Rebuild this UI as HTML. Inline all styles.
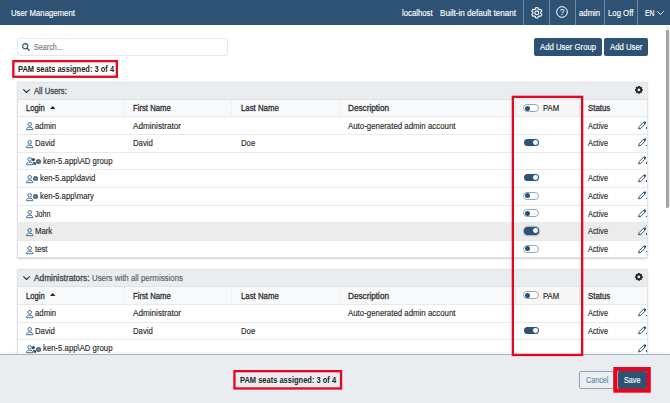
<!DOCTYPE html>
<html><head><meta charset="utf-8"><title>User Management</title>
<style>
*{box-sizing:border-box;margin:0;padding:0}
html,body{width:670px;height:403px;overflow:hidden;background:#fff}
body{font-family:"Liberation Sans",sans-serif;font-size:8.45px;color:#2a2a2a;position:relative}
.abs{position:absolute}
.t{--sx:.92;--ty:0px;position:absolute;top:0;display:inline-block;transform:translateY(var(--ty)) scaleX(var(--sx));transform-origin:0 50%;white-space:nowrap;-webkit-text-stroke:0.14px currentColor}

.b{font-weight:bold;font-size:8.7px;--sx:.85;-webkit-text-stroke:0}
.sb{font-size:8.7px;-webkit-text-stroke:0.3px currentColor;--sx:.9}
#hdr{left:0;top:0;width:670px;height:25px;background:#2e5274;color:#fff;line-height:26.5px}
.sep{position:absolute;top:0;width:1px;height:25px;background:#708aa3}
.btn{background:#2e5274;color:#fff;border-radius:2px;line-height:18.6px;height:17.5px}
.panel{left:17px;width:631px;border:1px solid #e2e5e8;background:#fff;overflow:hidden;box-shadow:0 0.5px 1.5px rgba(0,0,0,.18);border-radius:1.5px}
.ph{height:15.8px;background:#e9edf0;line-height:16.4px;position:relative;color:#444}
.row{height:17.7px;position:relative;border-top:1px solid #e8eaec;line-height:17.4px}
.row.h{color:#2f2f2f;background:#f8f9fa;border-top-color:#dfe2e5;line-height:17.4px}
.row.sel{background:#ececec}
.row.sel .tg.on{box-shadow:0 0 0 1.2px rgba(46,82,116,.32)}
.p2 .row.h{line-height:18.2px}
.pamh{position:absolute;left:497px;top:-1px;width:65px;height:18.4px;border:1px solid #e4e6e8;background:#f7f7f7}
.vs{position:absolute;top:0;width:1px;height:17px;background:#eef0f1}
.ic{position:absolute;display:block;overflow:visible}
.dot{position:absolute;left:628.2px;top:9.9px;width:1.4px;height:1.4px;background:#333;border-radius:50%}
.tg{position:absolute;left:506px;top:3.6px;width:15.3px;height:7.6px;border-radius:4px}
.tg.on{background:#2e5274}
.tg.on i{position:absolute;right:1.3px;top:1.4px;width:4.8px;height:4.8px;border-radius:50%;background:#fff}
.tg.off{background:#fff;border:1px solid #9aa9b8;height:8px;left:505.4px;width:15.7px}
.row.h .tg{top:4.6px}
.p2 .row .tg{top:4.2px}
.tg.off i{position:absolute;left:0.5px;top:0.5px;width:5px;height:5px;border-radius:50%;background:#2e5274}
.red{border:2px solid #e6061f;position:absolute}
</style></head><body>
<div id="hdr" class="abs">
<span class="t " style="left:11.3px;">User Management</span>
<span class="t " style="left:401.5px;">localhost</span>
<span class="t " style="left:440px;--sx:0.959;">Built-in default tenant</span>
<span class="t " style="left:578.7px;">admin</span>
<span class="t " style="left:608.3px;">Log Off</span>
<span class="t " style="left:644.8px;--sx:0.8;">EN</span>
<div class="sep" style="left:523px"></div><div class="sep" style="left:549px"></div><div class="sep" style="left:574.7px"></div><div class="sep" style="left:604.3px"></div><div class="sep" style="left:637px"></div>
<svg class="ic" style="left:530.7px;top:6.7px" width="11.6" height="11.6" viewBox="0 0 11.6 11.6"><path d="M4.75 0.61 L6.85 0.61 L7.21 2.06 L8.34 2.71 L9.77 2.29 L10.82 4.11 L9.75 5.15 L9.75 6.45 L10.82 7.49 L9.77 9.31 L8.34 8.89 L7.21 9.54 L6.85 10.99 L4.75 10.99 L4.39 9.54 L3.26 8.89 L1.83 9.31 L0.78 7.49 L1.85 6.45 L1.85 5.15 L0.78 4.11 L1.83 2.29 L3.26 2.71 L4.39 2.06Z" fill="none" stroke="#fff" stroke-width="1.05" stroke-linejoin="round"/><circle cx="5.8" cy="5.8" r="1.9" fill="none" stroke="#fff" stroke-width="1.05"/></svg>
<svg class="ic" style="left:555.8px;top:5.8px" width="12" height="12" viewBox="0 0 12 12"><circle cx="6" cy="6" r="5.35" fill="none" stroke="#fff" stroke-width="1"/><text x="6" y="8.9" font-family="Liberation Sans, sans-serif" font-size="8.4" fill="#fff" text-anchor="middle">?</text></svg>
<svg class="ic" style="left:657.3px;top:10.8px" width="7" height="4.2" viewBox="0 0 7 4.2"><path d="M0.6 0.6 L3.5 3.5 L6.4 0.6" fill="none" stroke="#fff" stroke-width="1" stroke-linecap="round" stroke-linejoin="round"/></svg>
</div>
<div class="abs" style="left:17px;top:38px;width:211px;height:18px;border:1px solid #e5e8ec;border-radius:2px;line-height:16.6px;color:#7a7a7a"><svg class="ic" style="left:4.3px;top:4px" width="8" height="8" viewBox="0 0 8 8"><circle cx="3.2" cy="3.2" r="2.55" fill="none" stroke="#2e5274" stroke-width="1.15"/><path d="M5.1 5.1 L7.2 7.2" stroke="#2e5274" stroke-width="1.3" stroke-linecap="round"/></svg><span class="t " style="left:15.8px;--sx:0.85;">Search...</span></div>
<div class="abs btn" style="left:534px;top:38px;width:67.5px"><span class="t " style="left:6px;">Add User Group</span></div>
<div class="abs btn" style="left:604px;top:38px;width:44px"><span class="t " style="left:5.8px;">Add User</span></div>
<span class="t b" style="left:17.7px;top:62px;--sx:0.863;line-height:14px;color:#222">PAM seats assigned: 3 of 4</span>
<svg class="ic" style="left:11px;top:59px" width="108" height="20" viewBox="0 0 108 20"><rect x="2.35" y="2.15" width="103.50" height="15.60" fill="none" stroke="#e6061f" stroke-width="2.3"/></svg>
<div class="abs panel " style="top:81.6px;height:176.4px"><div class="ph" style="height:15.95px"><svg class="ic" style="left:5.0px;top:6.4px" width="7.1" height="4.2" viewBox="0 0 7.1 4.2"><path d="M0.6 0.6 L3.55 3.5 L6.5 0.6" fill="none" stroke="#333" stroke-width="1.15" stroke-linecap="round" stroke-linejoin="round"/></svg><span class="t sb" style="left:16.2px;--sx:0.882;">All Users:</span><svg class="ic" style="left:617px;top:3.4px" width="7.8" height="7.8" viewBox="0 0 7.8 7.8"><path d="M3.05 0.09 L4.75 0.09 L5.00 1.22 L5.02 1.22 L5.99 0.61 L7.19 1.81 L6.58 2.78 L6.58 2.80 L7.71 3.05 L7.71 4.75 L6.58 5.00 L6.58 5.02 L7.19 5.99 L5.99 7.19 L5.02 6.58 L5.00 6.58 L4.75 7.71 L3.05 7.71 L2.80 6.58 L2.78 6.58 L1.81 7.19 L0.61 5.99 L1.22 5.02 L1.22 5.00 L0.09 4.75 L0.09 3.05 L1.22 2.80 L1.22 2.78 L0.61 1.81 L1.81 0.61 L2.78 1.22 L2.80 1.22Z M3.9 2.5 A1.4 1.4 0 1 0 3.9 5.3 A1.4 1.4 0 1 0 3.9 2.5Z" fill="#222" fill-rule="evenodd"/></svg></div><div class="row h"><span class="t sb" style="left:8.2px;--sx:0.883;">Login</span><svg class="ic" style="left:31.7px;top:6.2px" width="5.4" height="3.1" viewBox="0 0 5.2 3"><path d="M0 3 L2.6 0 L5.2 3Z" fill="#222"/></svg><span class="t sb" style="left:115.19999999999999px;--sx:0.889;">First Name</span><span class="t sb" style="left:222.5px;">Last Name</span><span class="t sb" style="left:330px;--sx:0.944;">Description</span><div class="pamh"></div><div class="tg off"><i></i></div><span class="t " style="left:525px;color:#222">PAM</span><span class="t sb" style="left:570.2px;">Status</span><i class="vs" style="left:106px"></i><i class="vs" style="left:212.5px"></i><i class="vs" style="left:320.5px"></i></div><div class="row" style="line-height:18.2px"><svg class="ic" style="left:8px;top:4.8px" width="7.4" height="8.2" viewBox="0 0 7.4 8.2"><circle cx="3.7" cy="2.3" r="1.8" fill="none" stroke="#3a6591" stroke-width="0.95"/><path d="M0.5 7.7 C0.5 5.8 1.8 5.2 3.7 5.2 S6.9 5.8 6.9 7.7 Z" fill="none" stroke="#3a6591" stroke-width="0.95" stroke-linejoin="round"/></svg><span class="t " style="left:16.5px;">admin</span><span class="t " style="left:114.6px;--sx:0.966;">Administrator</span><span class="t " style="left:330px;--sx:0.931;">Auto-generated admin account</span><span class="t " style="left:570.2px;--sx:0.872;">Active</span><svg class="ic" style="left:620px;top:3.5px" width="8.5" height="8.5" viewBox="0 0 8.5 8.5"><path d="M0.6 7.9 L1.2 5.6 L5.6 1.2 L7.3 2.9 L2.9 7.3 Z" fill="#fff" stroke="#2e5274" stroke-width="1" stroke-linejoin="round"/><path d="M5.2 1.6 L6.4 0.5 Q6.9 0.1 7.4 0.6 L7.9 1.1 Q8.4 1.6 8 2.1 L6.9 3.3 Z" fill="#2e5274"/></svg><i class="dot"></i></div><div class="row"><svg class="ic" style="left:8px;top:4.8px" width="7.4" height="8.2" viewBox="0 0 7.4 8.2"><circle cx="3.7" cy="2.3" r="1.8" fill="none" stroke="#3a6591" stroke-width="0.95"/><path d="M0.5 7.7 C0.5 5.8 1.8 5.2 3.7 5.2 S6.9 5.8 6.9 7.7 Z" fill="none" stroke="#3a6591" stroke-width="0.95" stroke-linejoin="round"/></svg><span class="t " style="left:16.5px;">David</span><span class="t " style="left:114.6px;">David</span><span class="t " style="left:222.5px;">Doe</span><div class="tg on"><i></i></div><span class="t " style="left:570.2px;--sx:0.872;">Active</span><svg class="ic" style="left:620px;top:3.5px" width="8.5" height="8.5" viewBox="0 0 8.5 8.5"><path d="M0.6 7.9 L1.2 5.6 L5.6 1.2 L7.3 2.9 L2.9 7.3 Z" fill="#fff" stroke="#2e5274" stroke-width="1" stroke-linejoin="round"/><path d="M5.2 1.6 L6.4 0.5 Q6.9 0.1 7.4 0.6 L7.9 1.1 Q8.4 1.6 8 2.1 L6.9 3.3 Z" fill="#2e5274"/></svg><i class="dot"></i></div><div class="row"><svg class="ic" style="left:8px;top:4.8px" width="10.5" height="8.2" viewBox="0 0 10.5 8.2"><circle cx="7.4" cy="2.6" r="1.6" fill="#2c4a69"/><path d="M6.9 4.9 C8.9 4.7 10.3 5.6 10.3 7.8 H7.6 C7.6 6.5 7.4 5.7 6.9 4.9Z" fill="#2c4a69"/><circle cx="3.7" cy="2.3" r="1.8" fill="none" stroke="#3a6591" stroke-width="0.95"/><path d="M0.5 7.7 C0.5 5.8 1.8 5.2 3.7 5.2 S6.9 5.8 6.9 7.7 Z" fill="none" stroke="#3a6591" stroke-width="0.95" stroke-linejoin="round"/></svg><svg class="ic" style="left:17.6px;top:6.2px" width="5" height="5" viewBox="0 0 5 5"><circle cx="2.5" cy="2.5" r="2.5" fill="#2a4866"/><path d="M0 2.5H5M2.5 0V5" stroke="#9fb0c2" stroke-width="0.4" fill="none"/><ellipse cx="2.5" cy="2.5" rx="1.15" ry="2.4" fill="none" stroke="#9fb0c2" stroke-width="0.35"/></svg><span class="t " style="left:24.8px;">ken-5.app\AD group</span><svg class="ic" style="left:620px;top:3.5px" width="8.5" height="8.5" viewBox="0 0 8.5 8.5"><path d="M0.6 7.9 L1.2 5.6 L5.6 1.2 L7.3 2.9 L2.9 7.3 Z" fill="#fff" stroke="#2e5274" stroke-width="1" stroke-linejoin="round"/><path d="M5.2 1.6 L6.4 0.5 Q6.9 0.1 7.4 0.6 L7.9 1.1 Q8.4 1.6 8 2.1 L6.9 3.3 Z" fill="#2e5274"/></svg><i class="dot"></i></div><div class="row"><svg class="ic" style="left:8px;top:4.8px" width="7.4" height="8.2" viewBox="0 0 7.4 8.2"><circle cx="3.7" cy="2.3" r="1.8" fill="none" stroke="#3a6591" stroke-width="0.95"/><path d="M0.5 7.7 C0.5 5.8 1.8 5.2 3.7 5.2 S6.9 5.8 6.9 7.7 Z" fill="none" stroke="#3a6591" stroke-width="0.95" stroke-linejoin="round"/></svg><svg class="ic" style="left:15.1px;top:6.2px" width="5" height="5" viewBox="0 0 5 5"><circle cx="2.5" cy="2.5" r="2.5" fill="#2a4866"/><path d="M0 2.5H5M2.5 0V5" stroke="#9fb0c2" stroke-width="0.4" fill="none"/><ellipse cx="2.5" cy="2.5" rx="1.15" ry="2.4" fill="none" stroke="#9fb0c2" stroke-width="0.35"/></svg><span class="t " style="left:22.2px;">ken-5.app\david</span><div class="tg on"><i></i></div><span class="t " style="left:570.2px;--sx:0.872;">Active</span><svg class="ic" style="left:620px;top:3.5px" width="8.5" height="8.5" viewBox="0 0 8.5 8.5"><path d="M0.6 7.9 L1.2 5.6 L5.6 1.2 L7.3 2.9 L2.9 7.3 Z" fill="#fff" stroke="#2e5274" stroke-width="1" stroke-linejoin="round"/><path d="M5.2 1.6 L6.4 0.5 Q6.9 0.1 7.4 0.6 L7.9 1.1 Q8.4 1.6 8 2.1 L6.9 3.3 Z" fill="#2e5274"/></svg><i class="dot"></i></div><div class="row"><svg class="ic" style="left:8px;top:4.8px" width="7.4" height="8.2" viewBox="0 0 7.4 8.2"><circle cx="3.7" cy="2.3" r="1.8" fill="none" stroke="#3a6591" stroke-width="0.95"/><path d="M0.5 7.7 C0.5 5.8 1.8 5.2 3.7 5.2 S6.9 5.8 6.9 7.7 Z" fill="none" stroke="#3a6591" stroke-width="0.95" stroke-linejoin="round"/></svg><svg class="ic" style="left:15.1px;top:6.2px" width="5" height="5" viewBox="0 0 5 5"><circle cx="2.5" cy="2.5" r="2.5" fill="#2a4866"/><path d="M0 2.5H5M2.5 0V5" stroke="#9fb0c2" stroke-width="0.4" fill="none"/><ellipse cx="2.5" cy="2.5" rx="1.15" ry="2.4" fill="none" stroke="#9fb0c2" stroke-width="0.35"/></svg><span class="t " style="left:22.2px;">ken-5.app\mary</span><div class="tg off"><i></i></div><span class="t " style="left:570.2px;--sx:0.872;">Active</span><svg class="ic" style="left:620px;top:3.5px" width="8.5" height="8.5" viewBox="0 0 8.5 8.5"><path d="M0.6 7.9 L1.2 5.6 L5.6 1.2 L7.3 2.9 L2.9 7.3 Z" fill="#fff" stroke="#2e5274" stroke-width="1" stroke-linejoin="round"/><path d="M5.2 1.6 L6.4 0.5 Q6.9 0.1 7.4 0.6 L7.9 1.1 Q8.4 1.6 8 2.1 L6.9 3.3 Z" fill="#2e5274"/></svg><i class="dot"></i></div><div class="row"><svg class="ic" style="left:8px;top:4.8px" width="7.4" height="8.2" viewBox="0 0 7.4 8.2"><circle cx="3.7" cy="2.3" r="1.8" fill="none" stroke="#3a6591" stroke-width="0.95"/><path d="M0.5 7.7 C0.5 5.8 1.8 5.2 3.7 5.2 S6.9 5.8 6.9 7.7 Z" fill="none" stroke="#3a6591" stroke-width="0.95" stroke-linejoin="round"/></svg><span class="t " style="left:16.5px;--sx:0.85;">John</span><div class="tg off"><i></i></div><span class="t " style="left:570.2px;--sx:0.872;">Active</span><svg class="ic" style="left:620px;top:3.5px" width="8.5" height="8.5" viewBox="0 0 8.5 8.5"><path d="M0.6 7.9 L1.2 5.6 L5.6 1.2 L7.3 2.9 L2.9 7.3 Z" fill="#fff" stroke="#2e5274" stroke-width="1" stroke-linejoin="round"/><path d="M5.2 1.6 L6.4 0.5 Q6.9 0.1 7.4 0.6 L7.9 1.1 Q8.4 1.6 8 2.1 L6.9 3.3 Z" fill="#2e5274"/></svg><i class="dot"></i></div><div class="row sel"><svg class="ic" style="left:8px;top:4.8px" width="7.4" height="8.2" viewBox="0 0 7.4 8.2"><circle cx="3.7" cy="2.3" r="1.8" fill="none" stroke="#3a6591" stroke-width="0.95"/><path d="M0.5 7.7 C0.5 5.8 1.8 5.2 3.7 5.2 S6.9 5.8 6.9 7.7 Z" fill="none" stroke="#3a6591" stroke-width="0.95" stroke-linejoin="round"/></svg><span class="t " style="left:16.5px;">Mark</span><div class="tg on"><i></i></div><span class="t " style="left:570.2px;--sx:0.872;">Active</span><svg class="ic" style="left:620px;top:3.5px" width="8.5" height="8.5" viewBox="0 0 8.5 8.5"><path d="M0.6 7.9 L1.2 5.6 L5.6 1.2 L7.3 2.9 L2.9 7.3 Z" fill="#fff" stroke="#2e5274" stroke-width="1" stroke-linejoin="round"/><path d="M5.2 1.6 L6.4 0.5 Q6.9 0.1 7.4 0.6 L7.9 1.1 Q8.4 1.6 8 2.1 L6.9 3.3 Z" fill="#2e5274"/></svg><i class="dot"></i></div><div class="row"><svg class="ic" style="left:8px;top:4.8px" width="7.4" height="8.2" viewBox="0 0 7.4 8.2"><circle cx="3.7" cy="2.3" r="1.8" fill="none" stroke="#3a6591" stroke-width="0.95"/><path d="M0.5 7.7 C0.5 5.8 1.8 5.2 3.7 5.2 S6.9 5.8 6.9 7.7 Z" fill="none" stroke="#3a6591" stroke-width="0.95" stroke-linejoin="round"/></svg><span class="t " style="left:16.5px;">test</span><div class="tg off"><i></i></div><span class="t " style="left:570.2px;--sx:0.872;">Active</span><svg class="ic" style="left:620px;top:3.5px" width="8.5" height="8.5" viewBox="0 0 8.5 8.5"><path d="M0.6 7.9 L1.2 5.6 L5.6 1.2 L7.3 2.9 L2.9 7.3 Z" fill="#fff" stroke="#2e5274" stroke-width="1" stroke-linejoin="round"/><path d="M5.2 1.6 L6.4 0.5 Q6.9 0.1 7.4 0.6 L7.9 1.1 Q8.4 1.6 8 2.1 L6.9 3.3 Z" fill="#2e5274"/></svg><i class="dot"></i></div></div>
<div class="abs panel p2" style="top:269px;height:100px"><div class="ph" style="height:16.3px"><svg class="ic" style="left:5.0px;top:6.4px" width="7.1" height="4.2" viewBox="0 0 7.1 4.2"><path d="M0.6 0.6 L3.55 3.5 L6.5 0.6" fill="none" stroke="#333" stroke-width="1.15" stroke-linecap="round" stroke-linejoin="round"/></svg><span class="t sb" style="left:16.2px;--sx:0.957;">Administrators:</span><span class="t " style="left:74px;--sx:0.933;color:#5c5c5c">Users with all permissions</span><svg class="ic" style="left:617px;top:3.4px" width="7.8" height="7.8" viewBox="0 0 7.8 7.8"><path d="M3.05 0.09 L4.75 0.09 L5.00 1.22 L5.02 1.22 L5.99 0.61 L7.19 1.81 L6.58 2.78 L6.58 2.80 L7.71 3.05 L7.71 4.75 L6.58 5.00 L6.58 5.02 L7.19 5.99 L5.99 7.19 L5.02 6.58 L5.00 6.58 L4.75 7.71 L3.05 7.71 L2.80 6.58 L2.78 6.58 L1.81 7.19 L0.61 5.99 L1.22 5.02 L1.22 5.00 L0.09 4.75 L0.09 3.05 L1.22 2.80 L1.22 2.78 L0.61 1.81 L1.81 0.61 L2.78 1.22 L2.80 1.22Z M3.9 2.5 A1.4 1.4 0 1 0 3.9 5.3 A1.4 1.4 0 1 0 3.9 2.5Z" fill="#222" fill-rule="evenodd"/></svg></div><div class="row h"><span class="t sb" style="left:8.2px;--sx:0.883;">Login</span><svg class="ic" style="left:31.7px;top:6.2px" width="5.4" height="3.1" viewBox="0 0 5.2 3"><path d="M0 3 L2.6 0 L5.2 3Z" fill="#222"/></svg><span class="t sb" style="left:115.19999999999999px;--sx:0.889;">First Name</span><span class="t sb" style="left:222.5px;">Last Name</span><span class="t sb" style="left:330px;--sx:0.944;">Description</span><div class="pamh"></div><div class="tg off"><i></i></div><span class="t " style="left:525px;color:#222">PAM</span><span class="t sb" style="left:570.2px;">Status</span><i class="vs" style="left:106px"></i><i class="vs" style="left:212.5px"></i><i class="vs" style="left:320.5px"></i></div><div class="row"><svg class="ic" style="left:8px;top:4.8px" width="7.4" height="8.2" viewBox="0 0 7.4 8.2"><circle cx="3.7" cy="2.3" r="1.8" fill="none" stroke="#3a6591" stroke-width="0.95"/><path d="M0.5 7.7 C0.5 5.8 1.8 5.2 3.7 5.2 S6.9 5.8 6.9 7.7 Z" fill="none" stroke="#3a6591" stroke-width="0.95" stroke-linejoin="round"/></svg><span class="t " style="left:16.5px;">admin</span><span class="t " style="left:114.6px;--sx:0.966;">Administrator</span><span class="t " style="left:330px;--sx:0.931;">Auto-generated admin account</span><span class="t " style="left:570.2px;--sx:0.872;">Active</span><svg class="ic" style="left:620px;top:3.5px" width="8.5" height="8.5" viewBox="0 0 8.5 8.5"><path d="M0.6 7.9 L1.2 5.6 L5.6 1.2 L7.3 2.9 L2.9 7.3 Z" fill="#fff" stroke="#2e5274" stroke-width="1" stroke-linejoin="round"/><path d="M5.2 1.6 L6.4 0.5 Q6.9 0.1 7.4 0.6 L7.9 1.1 Q8.4 1.6 8 2.1 L6.9 3.3 Z" fill="#2e5274"/></svg><i class="dot"></i></div><div class="row"><svg class="ic" style="left:8px;top:4.8px" width="7.4" height="8.2" viewBox="0 0 7.4 8.2"><circle cx="3.7" cy="2.3" r="1.8" fill="none" stroke="#3a6591" stroke-width="0.95"/><path d="M0.5 7.7 C0.5 5.8 1.8 5.2 3.7 5.2 S6.9 5.8 6.9 7.7 Z" fill="none" stroke="#3a6591" stroke-width="0.95" stroke-linejoin="round"/></svg><span class="t " style="left:16.5px;">David</span><span class="t " style="left:114.6px;">David</span><span class="t " style="left:222.5px;">Doe</span><div class="tg on"><i></i></div><span class="t " style="left:570.2px;--sx:0.872;">Active</span><svg class="ic" style="left:620px;top:3.5px" width="8.5" height="8.5" viewBox="0 0 8.5 8.5"><path d="M0.6 7.9 L1.2 5.6 L5.6 1.2 L7.3 2.9 L2.9 7.3 Z" fill="#fff" stroke="#2e5274" stroke-width="1" stroke-linejoin="round"/><path d="M5.2 1.6 L6.4 0.5 Q6.9 0.1 7.4 0.6 L7.9 1.1 Q8.4 1.6 8 2.1 L6.9 3.3 Z" fill="#2e5274"/></svg><i class="dot"></i></div><div class="row"><svg class="ic" style="left:8px;top:4.8px" width="10.5" height="8.2" viewBox="0 0 10.5 8.2"><circle cx="7.4" cy="2.6" r="1.6" fill="#2c4a69"/><path d="M6.9 4.9 C8.9 4.7 10.3 5.6 10.3 7.8 H7.6 C7.6 6.5 7.4 5.7 6.9 4.9Z" fill="#2c4a69"/><circle cx="3.7" cy="2.3" r="1.8" fill="none" stroke="#3a6591" stroke-width="0.95"/><path d="M0.5 7.7 C0.5 5.8 1.8 5.2 3.7 5.2 S6.9 5.8 6.9 7.7 Z" fill="none" stroke="#3a6591" stroke-width="0.95" stroke-linejoin="round"/></svg><svg class="ic" style="left:17.6px;top:6.2px" width="5" height="5" viewBox="0 0 5 5"><circle cx="2.5" cy="2.5" r="2.5" fill="#2a4866"/><path d="M0 2.5H5M2.5 0V5" stroke="#9fb0c2" stroke-width="0.4" fill="none"/><ellipse cx="2.5" cy="2.5" rx="1.15" ry="2.4" fill="none" stroke="#9fb0c2" stroke-width="0.35"/></svg><span class="t " style="left:24.8px;">ken-5.app\AD group</span><svg class="ic" style="left:620px;top:3.5px" width="8.5" height="8.5" viewBox="0 0 8.5 8.5"><path d="M0.6 7.9 L1.2 5.6 L5.6 1.2 L7.3 2.9 L2.9 7.3 Z" fill="#fff" stroke="#2e5274" stroke-width="1" stroke-linejoin="round"/><path d="M5.2 1.6 L6.4 0.5 Q6.9 0.1 7.4 0.6 L7.9 1.1 Q8.4 1.6 8 2.1 L6.9 3.3 Z" fill="#2e5274"/></svg><i class="dot"></i></div></div>
<div class="abs" style="left:0;top:353.6px;width:670px;height:50px;background:#e9edf0;border-top:1px solid #a9b5c0;box-shadow:0 -1px 3px rgba(0,0,0,.07)"></div>
<span class="t b" style="left:240px;top:373.2px;--sx:0.863;line-height:14px;color:#222">PAM seats assigned: 3 of 4</span>
<svg class="ic" style="left:232px;top:369px" width="112" height="22" viewBox="0 0 112 22"><rect x="2.45" y="2.15" width="106.60" height="17.30" fill="none" stroke="#e6061f" stroke-width="2.3"/></svg>
<div class="abs" style="left:579px;top:371.2px;width:35px;height:17.8px;border:1px solid #8aa5bd;border-radius:2px;line-height:16.2px;color:#5d86ab;background:#edf0f3"><span class="t " style="left:5.6px;--sx:0.85;">Cancel</span></div>
<div class="abs btn" style="left:618px;top:371px;width:28.8px;height:18px;line-height:19.4px;box-shadow:0 0 0 0.6px rgba(255,255,255,.55)"><span class="t " style="left:6.2px;--sx:0.852;">Save</span></div>
<svg class="ic" style="left:612px;top:366px" width="40" height="28" viewBox="0 0 40 28"><rect x="3.40" y="3.10" width="33.30" height="21.50" fill="none" stroke="#e6061f" stroke-width="4.2"/></svg>
<svg class="ic" style="left:510px;top:94px" width="75" height="264" viewBox="0 0 75 264"><rect x="2.85" y="2.85" width="69.30" height="258.10" fill="none" stroke="#e6061f" stroke-width="2.3"/></svg>
<svg class="ic" style="left:664px;top:26px" width="6" height="184" viewBox="0 0 6 184"><rect x="2" y="4" width="3.2" height="177.7" fill="#a4a4a4"/><path d="M2.6 2.4 L3.6 1 L4.6 2.4Z" fill="#b0b0b0"/></svg>
</body></html>
